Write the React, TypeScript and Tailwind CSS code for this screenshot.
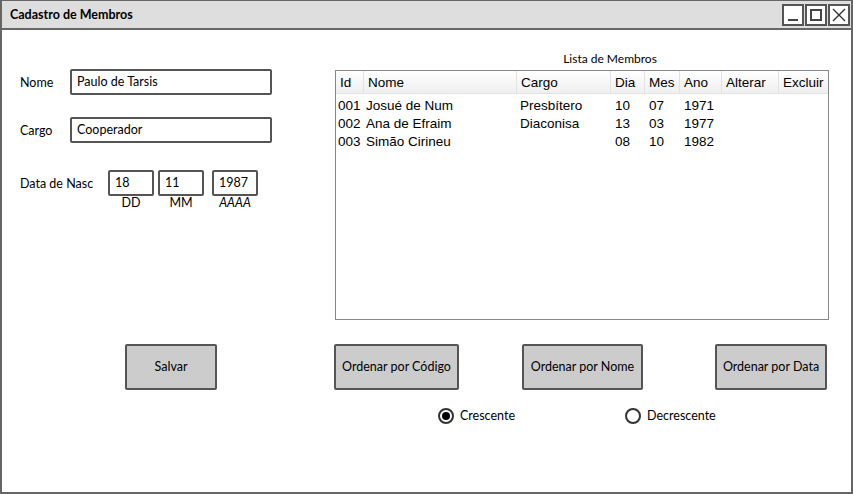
const membros = [
  { id: "001", nome: "Josué de Num", cargo: "Presbítero", dia: "10", mes: "07", ano: "1971" },
  { id: "002", nome: "Ana de Efraim", cargo: "Diaconisa", dia: "13", mes: "03", ano: "1977" },
  { id: "003", nome: "Simão Cirineu", cargo: "", dia: "08", mes: "10", ano: "1982" },
];

const cols = [
  { label: "Id", w: "w-[28px]" },
  { label: "Nome", w: "w-[153px]" },
  { label: "Cargo", w: "w-[94px]" },
  { label: "Dia", w: "w-[34px]" },
  { label: "Mes", w: "w-[35px]" },
  { label: "Ano", w: "w-[42px]" },
  { label: "Alterar", w: "w-[57px]" },
  { label: "Excluir", w: "w-[49px]" },
];

const sketch = "font-['Lato','Liberation_Sans',sans-serif]";
const ui = "font-['Liberation_Sans','Arial',sans-serif]";

function WinButton({ children }: { children: React.ReactNode }) {
  return (
    <div className="w-[22px] h-[22px] border-2 border-[#555] bg-white flex items-center justify-center">
      {children}
    </div>
  );
}

function Field({ value, w }: { value: string; w: string }) {
  return (
    <div className={`${w} h-[26px] border-2 border-[#555] rounded-[2px] bg-white px-[5px] pt-[1px] flex items-center text-[12.5px] text-black`}>
      {value}
    </div>
  );
}

function Button({ label, w, ml }: { label: string; w: string; ml: string }) {
  return (
    <div className={`${w} ${ml} h-[46px] shrink-0 bg-[#cccccc] border-2 border-[#555] rounded-[2px] pt-[1px] flex items-center justify-center text-[12.5px] text-black`}>
      {label}
    </div>
  );
}

export default function App() {
  return (
    <div className={`w-[853px] h-[494px] bg-white border-l-2 border-r-2 border-b-2 border-t border-[#666] flex flex-col ${sketch}`}>
      {/* title bar */}
      <div className="h-[29px] shrink-0 bg-[#dedede] border-b-2 border-[#666] flex items-center justify-between pl-[8px] pr-[1px]">
        <span className="text-[12.5px] font-bold text-black pt-[1px]">Cadastro de Membros</span>
        <div className="flex gap-[1px] mt-[1px]">
          <WinButton>
            <div className="w-[10px] h-[2px] bg-[#444] mt-[10px]" />
          </WinButton>
          <WinButton>
            <div className="w-[12px] h-[12px] border-2 border-[#444]" />
          </WinButton>
          <WinButton>
            <svg width="16" height="16" viewBox="0 0 16 16">
              <path d="M2 2 L14 14 M14 2 L2 14" stroke="#333" strokeWidth="1.4" />
            </svg>
          </WinButton>
        </div>
      </div>

      <div className="flex">
        {/* form */}
        <div className="w-[333px] shrink-0 pl-[18px] pt-[39px] flex flex-col text-[12.5px] text-black">
          <div className="flex items-center">
            <span className="w-[50px] pt-[3px]">Nome</span>
            <Field value="Paulo de Tarsis" w="w-[202px]" />
          </div>
          <div className="flex items-center mt-[22px]">
            <span className="w-[50px] pt-[3px]">Cargo</span>
            <Field value="Cooperador" w="w-[202px]" />
          </div>
          <div className="flex mt-[27px]">
            <span className="w-[88px] h-[26px] pt-[3px] flex items-center">Data de Nasc</span>
            <div className="flex flex-col items-center">
              <Field value="18" w="w-[46px]" />
              <span className="leading-[13px]">DD</span>
            </div>
            <div className="flex flex-col items-center ml-[4px]">
              <Field value="11" w="w-[46px]" />
              <span className="leading-[13px]">MM</span>
            </div>
            <div className="flex flex-col items-center ml-[8px]">
              <Field value="1987" w="w-[46px]" />
              <span className="leading-[13px] italic">AAAA</span>
            </div>
          </div>
        </div>

        {/* list */}
        <div className="w-[494px] shrink-0 pt-[22px] flex flex-col">
          <div className="h-[14px] leading-[14px] mb-[4px] text-center text-[12px] text-black pl-[56px]">Lista de Membros</div>
          <div className={`h-[250px] border border-[#888] bg-white ${ui} text-[13.5px] text-black`}>
            <div className="flex h-[23px] bg-gradient-to-b from-white to-[#efefef] border-b border-[#e2e2e2]">
              {cols.map((c, i) => (
                <div
                  key={c.label}
                  className={`${c.w} shrink-0 h-full flex items-center pl-[4px] pt-[3px] ${i < cols.length - 1 ? "border-r border-[#e2e2e2]" : ""}`}
                >
                  {c.label}
                </div>
              ))}
            </div>
            <div className="pt-[3px]">
              {membros.map((m) => (
                <div key={m.id} className="flex h-[18px] items-center">
                  <div className="w-[30px] pl-[2px] shrink-0">{m.id}</div>
                  <div className="w-[153px] shrink-0">{m.nome}</div>
                  <div className="w-[95px] pl-[1px] shrink-0">{m.cargo}</div>
                  <div className="w-[34px] pl-[1px] shrink-0">{m.dia}</div>
                  <div className="w-[35px] pl-[1px] shrink-0">{m.mes}</div>
                  <div className="w-[42px] pl-[1px] shrink-0">{m.ano}</div>
                </div>
              ))}
            </div>
          </div>
        </div>
      </div>

      {/* buttons */}
      <div className="flex mt-[24px]">
        <Button label="Salvar" w="w-[92px]" ml="ml-[123px]" />
        <Button label="Ordenar por Código" w="w-[125px]" ml="ml-[117px]" />
        <Button label="Ordenar por Nome" w="w-[121px]" ml="ml-[63px]" />
        <Button label="Ordenar por Data" w="w-[112px]" ml="ml-[72px]" />
      </div>

      {/* order */}
      <div className="flex items-center mt-[17px] text-[12.5px] text-black">
        <div className="ml-[436px] w-[16px] h-[16px] rounded-full border-2 border-[#333] flex items-center justify-center">
          <div className="w-[8px] h-[8px] rounded-full bg-black" />
        </div>
        <span className="ml-[6px]">Crescente</span>
        <div className="ml-[110px] w-[16px] h-[16px] rounded-full border-2 border-[#333]" />
        <span className="ml-[6px]">Decrescente</span>
      </div>
    </div>
  );
}
